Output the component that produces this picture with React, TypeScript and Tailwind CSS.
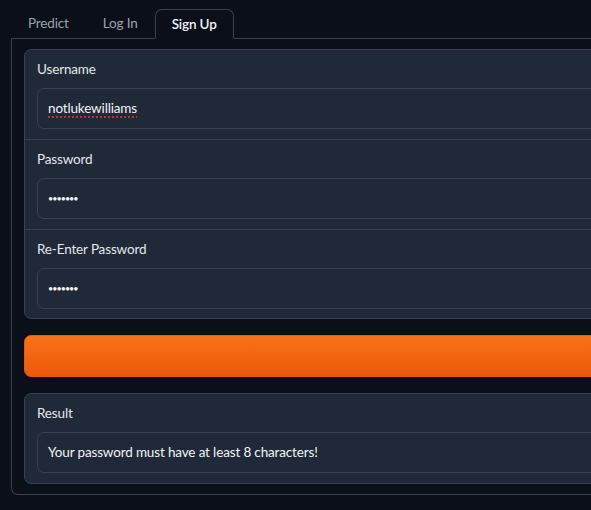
import { type ReactNode } from "react";

const FONT = "font-['Lato','Liberation_Sans',sans-serif]";

type FieldProps = {
  label: string;
  children: ReactNode;
  divider?: boolean;
  tight?: boolean;
};

function Field({ label, children, divider, tight }: FieldProps) {
  return (
    <div
      className={`px-3 pt-[9px] ${tight ? "pb-[9px]" : "pb-[10px]"} ${
        divider ? "border-t border-[#374151]" : ""
      }`}
    >
      <div className="mb-[9px] h-5 text-[13.5px] leading-5 tracking-[-0.15px] text-[#e5e7eb]">
        {label}
      </div>
      <div className="flex h-[41px] items-center rounded-[7px] border border-[#374151] bg-[#1f2937] px-[10px] text-[13.5px] tracking-[-0.15px] text-[#f3f4f6]">
        {children}
      </div>
    </div>
  );
}

function Dots() {
  return <span className="text-[9px] tracking-[-1px]">•••••••</span>;
}

export default function App() {
  const tabs = ["Predict", "Log In", "Sign Up"];
  const selectedTab = "Sign Up";

  return (
    <div className={`h-[510px] w-[591px] overflow-hidden bg-[#0b0f19] ${FONT}`}>
      <div className="w-[800px] pt-[9px] pl-[11px]">
        <div className="flex border-b border-[#374151]">
          {tabs.map((tab) =>
            tab === selectedTab ? (
              <div
                key={tab}
                className="-mb-px flex h-[30px] items-center rounded-t-[7px] border border-[#374151] border-b-[#0b0f19] bg-[#0b0f19] px-4 text-[13.5px] font-semibold tracking-[-0.15px] text-[#f3f4f6]"
              >
                {tab}
              </div>
            ) : (
              <div
                key={tab}
                className="flex h-[29px] items-center border border-transparent px-4 text-[13.5px] tracking-[-0.15px] text-[#9ca3af]"
              >
                {tab}
              </div>
            ),
          )}
        </div>

        <div className="flex flex-col gap-4 rounded-b-[7px] border border-t-0 border-[#374151] px-3 pt-[10px] pb-[10px]">
          <div className="rounded-[7px] border border-[#374151] bg-[#1f2937]">
            <Field label="Username">
              <span className="underline decoration-[#dc2626] decoration-dotted decoration-[1.5px] underline-offset-[3px]">
                notlukewilliams
              </span>
            </Field>
            <Field label="Password" divider>
              <Dots />
            </Field>
            <Field label="Re-Enter Password" divider tight>
              <Dots />
            </Field>
          </div>

          <button className="h-[42px] w-full rounded-[7px] border border-[#ea580c] bg-gradient-to-b from-[#f97316] to-[#ea580c]" />

          <div className="rounded-[7px] border border-[#374151] bg-[#1f2937]">
            <Field label="Result">Your password must have at least 8 characters!</Field>
          </div>
        </div>
      </div>
    </div>
  );
}
